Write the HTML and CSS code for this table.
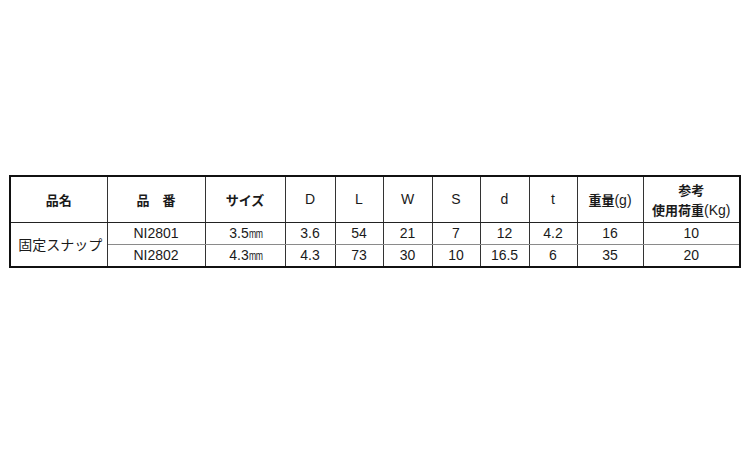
FILE: index.html
```html
<!DOCTYPE html>
<html lang="ja">
<head>
<meta charset="utf-8">
<link rel="stylesheet" href="styles.css">
</head>
<body>
<table class="spec">
  <colgroup>
    <col class="c97"><col class="c98"><col class="c80"><col class="c50"><col class="c48"><col class="c49"><col class="c48"><col class="c49"><col class="c48"><col class="c66"><col class="c97">
  </colgroup>
  <thead>
    <tr class="head">
      <th><span class="jp">品名</span></th>
      <th><span class="jp">品　番</span></th>
      <th><span class="jp">サイズ</span></th>
      <th>D</th>
      <th>L</th>
      <th>W</th>
      <th>S</th>
      <th>d</th>
      <th>t</th>
      <th><span class="jp">重量</span>(g)</th>
      <th class="last"><span class="jp">参考</span><br><span class="jp">使用荷重</span>(Kg)</th>
    </tr>
  </thead>
  <tbody>
    <tr class="row first">
      <td rowspan="2" class="name">固定スナップ</td>
      <td>NI2801</td>
      <td>3.5<span class="mm">mm</span></td>
      <td>3.6</td>
      <td>54</td>
      <td>21</td>
      <td>7</td>
      <td>12</td>
      <td>4.2</td>
      <td>16</td>
      <td>10</td>
    </tr>
    <tr class="row">
      <td>NI2802</td>
      <td>4.3<span class="mm">mm</span></td>
      <td>4.3</td>
      <td>73</td>
      <td>30</td>
      <td>10</td>
      <td>16.5</td>
      <td>6</td>
      <td>35</td>
      <td>20</td>
    </tr>
  </tbody>
</table>
</body>
</html>
```

FILE: styles.css
```css
html, body {
  margin: 0;
  padding: 0;
  background: #ffffff;
}
body {
  padding: 175px 0 0 9px;
  font-family: "Liberation Sans", "Noto Sans CJK JP", sans-serif;
  color: #1a1a1a;
}
.spec {
  border-collapse: collapse;
  table-layout: fixed;
  width: 732px;
  border: 2px solid #111;
  font-size: 14px;
}
.c97 { width: 97px; }
.c98 { width: 98px; }
.c80 { width: 80px; }
.c50 { width: 50px; }
.c48 { width: 48px; }
.c49 { width: 49px; }
.c66 { width: 66px; }
.spec th, .spec td {
  border-left: 1px solid #333;
  border-right: 1px solid #333;
  padding: 0;
  text-align: center;
  vertical-align: middle;
  line-height: 17px;
}
.spec th {
  font-weight: normal;
  height: 44px;
  border-bottom: 1px solid #222;
}
.jp {
  font-family: "Noto Sans CJK JP", "Liberation Sans", sans-serif;
  font-weight: 700;
  font-size: 13px;
}
.spec th.last {
  line-height: 20px;
  padding-top: 1px;
}
.row td {
  height: 21px;
}
.row.first td {
  border-bottom: 1px solid #8a8a8a;
}
.row.first td.name {
  border-bottom: 2px solid #111;
}
.name {
  font-family: "Noto Sans CJK JP", "Liberation Sans", sans-serif;
  font-size: 14px;
  text-align: left;
  padding-left: 3px !important;
}
.mm {
  display: inline-block;
  font-size: 12px;
  width: 12px;
  letter-spacing: -0.5px;
  transform: scaleX(0.72);
  transform-origin: left center;
  color: #1a1a1a;
}
```
